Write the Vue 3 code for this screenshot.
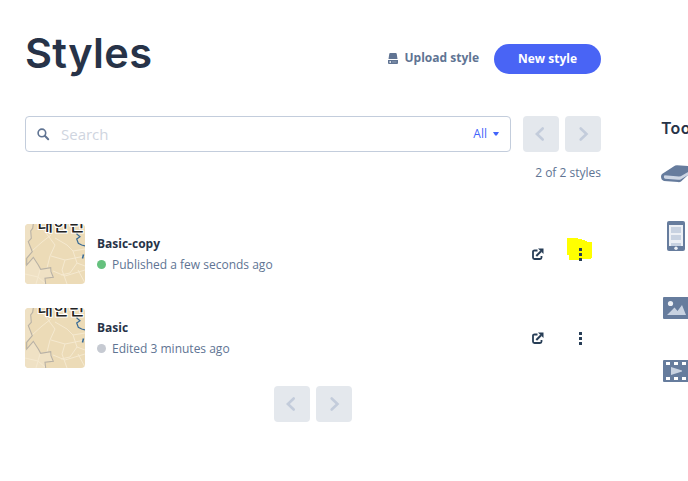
<script setup>
const styles = [
  { name: 'Basic-copy', status: 'Published a few seconds ago', live: true, marked: true },
  { name: 'Basic', status: 'Edited 3 minutes ago', live: false, marked: false },
]
</script>

<template>
  <div class="page">
    <main class="main">
      <header class="head">
        <h1 class="title">Styles</h1>
        <div class="actions">
          <a class="upload">
            <svg width="10" height="11" viewBox="0 0 10 11" fill="currentColor">
              <path d="M2.200 0h5.600q.8 0 .9.800L9.500 6H.5L1.300.8Q1.400 0 2.200 0z" />
              <path fill-rule="evenodd" d="M0 7h10v3q0 1-1 1H1q-1 0-1-1zM1.500 8.300v1.400H3V8.300z" />
              <path d="M4 8.300h4.500v1.300H4z" fill="#8394ad" />
            </svg>
            <span>Upload style</span>
          </a>
          <button class="new">New style</button>
        </div>
      </header>

      <div class="tools">
        <div class="search">
          <svg width="13" height="13" viewBox="0 0 13 13" fill="none" stroke="#607493">
            <circle cx="4.9" cy="4.9" r="3.8" stroke-width="1.6" />
            <path d="M7.8 7.8l3.4 3.4" stroke-width="2" stroke-linecap="round" />
          </svg>
          <span class="placeholder">Search</span>
          <span class="filter">All</span>
          <svg width="6" height="4" viewBox="0 0 6 4"><path d="M0 0h6L3.8 3.6H2.2z" fill="#4264fb" /></svg>
        </div>
        <div class="pager">
          <span class="page-btn"><svg width="18" height="18" viewBox="0 0 18 18"><path d="M10.700 3.500L4.900 9l5.800 5.500" /></svg></span>
          <span class="page-btn"><svg width="18" height="18" viewBox="0 0 18 18"><path d="M6.700 3.500L12.500 9l-5.800 5.500" /></svg></span>
        </div>
      </div>
      <p class="count">2 of 2 styles</p>

      <ul class="list">
        <li v-for="s in styles" :key="s.name" class="row">
          <svg class="thumb" width="60" height="60" viewBox="0 0 60 60" fill="none">
            <rect width="60" height="60" fill="#ecdbb7" />
            <path d="M0 0h8L6 7v7l-3 4 4 10-5 6H0z" fill="#efe1c4" />
            <path d="M0 41h2l6-8 5 8 3 4 10-1 2 9-8 1 1 6H0z" fill="#efe1c4" />
            <g stroke="#f5e9d0" stroke-width="1">
              <path d="M7 27l10-9 9-7M17 4l7 9 6 8-5 11-3 12M26 32l14 4 20-4M40 36l-3 10 5 14M48 27l4 12-7 10-9 2M28 47l12 5 20-6" />
              <path d="M0 50l13 3 8 7M11 60l4-14M30 14l12 7 6 6 12-2M52 39l8 3M53 46l7 13" />
            </g>
            <path d="M8.3 0l-.6 4.3-2 2.7.6 7.3-3 3.4 4 10-5.600 6.600V41l6.600-7.700 5 7.700 2.400 4.300 10-1.600.3 4 2.300 5.600-8.300 1 .7 5.700" stroke="#b8b1a5" stroke-width="1.1" />
            <path d="M53 8l-1.300 2 3.300 2.700-3.300 2.300 1.600 4.300L56.700 21l3.300 1" stroke="#396b96" stroke-width="1.2" />
            <path d="M58.500 30.500l-1 4" stroke="#396b96" stroke-width="1.6" />
            <text class="map-label" x="12.500" y="7">대한민</text>
          </svg>
          <div class="info">
            <strong class="name">{{ s.name }}</strong>
            <span class="status"><i class="dot" :class="{ live: s.live }"></i>{{ s.status }}</span>
          </div>
          <svg class="share" width="12" height="12" viewBox="0 0 12 12" fill="none" stroke="#273d56">
            <path d="M5.500 2.500H2.500Q1 2.500 1 3.500V9.500Q1 11 2.500 11H8q1.500 0 1.500-1.500V8" stroke-width="1.8" />
            <path d="M4.300 8L9 3.200" stroke-width="2" />
            <path d="M6 .5h5.500V6z" fill="#273d56" stroke="none" />
          </svg>
          <span class="more">
            <svg v-if="s.marked" class="marker" width="25" height="22" viewBox="0 0 25 22">
              <path d="M0 0h11v1h4v1h3v1h2v1h5v16h-1v1H13v1H2v-5H0z" fill="#ff0" />
            </svg>
            <svg class="dots" width="3" height="13" viewBox="0 0 3 13" fill="#273d56">
              <rect width="3" height="3" rx=".3" /><rect y="5" width="3" height="3" rx=".3" /><rect y="10" width="3" height="3" rx=".3" />
            </svg>
          </span>
        </li>
      </ul>

      <div class="pager bottom">
        <span class="page-btn"><svg width="18" height="18" viewBox="0 0 18 18"><path d="M10.700 3.500L4.900 9l5.800 5.500" /></svg></span>
        <span class="page-btn"><svg width="18" height="18" viewBox="0 0 18 18"><path d="M6.700 3.500L12.500 9l-5.800 5.500" /></svg></span>
      </div>
    </main>

    <aside class="side">
      <h2 class="side-title">Tools</h2>
      <svg class="book" width="36" height="18" viewBox="0 0 36 18">
        <path d="M1 9L13 1.300Q14 .3 16 .3L36 1.500 20 16.500q-1 .8-3 .6L3 16Q0 15 0 11.500 0 10 1 9z" fill="#667c9d" />
        <path d="M3.500 10.200L18 11.500q2 0 3-1L35 2.500v2.500L20 14.300q-1 .7-3 .5L4 13.700Q2 12.500 3.500 10.200z" fill="#cdd6e4" />
      </svg>
      <svg class="phone" width="18" height="30" viewBox="0 0 18 30">
        <rect width="18" height="30" rx="2" fill="#667c9d" />
        <rect x="2" y="4" width="14" height="21" fill="#edf0f5" />
        <path d="M4 6h10v6H4zM4 14h10v5H4zM4 22h10v3H4z" fill="#c8d2e1" />
        <circle cx="9" cy="27.300" r="1.700" fill="#edf0f5" />
      </svg>
      <svg class="image" width="30" height="22" viewBox="0 0 30 22">
        <rect width="30" height="22" rx="1" fill="#667c9d" />
        <circle cx="7.500" cy="6.500" r="2.600" fill="#edf0f5" />
        <path d="M4 18l7.500-7.500 3 3.500L19 8l4 10z" fill="#c8d2e1" />
      </svg>
      <svg class="film" width="30" height="22" viewBox="0 0 30 22">
        <rect width="30" height="22" rx="1" fill="#667c9d" />
        <path d="M3 2h4v3H3zM11 2h4v3h-4zM19 2h4v3h-4zM3 17h4v3H3zM11 17h4v3h-4zM19 17h4v3h-4z" fill="#fff" />
        <path d="M8 7l11 3.500v1L8 15z" fill="#c8d2e1" />
      </svg>
    </aside>
  </div>
</template>

<style>
body {
  background: #fff;
  overflow: hidden;
}
</style>

<style scoped>
.page {
  box-sizing: border-box;
  display: flex;
  gap: 60px;
  width: 688px;
  height: 481px;
  padding-left: 25px;
  overflow: hidden;
  font-family: "Open Sans", "Noto Sans CJK KR", sans-serif;
  font-size: 12px;
  line-height: 18px;
  color: #607493;
}
svg { display: block; flex: none; }
.main { flex: none; width: 576px; }
.head {
  display: flex;
  justify-content: space-between;
  height: 116px;
}
.title {
  margin: 23px 0 0;
  font-family: Inter, "Open Sans", sans-serif;
  font-size: 41.5px;
  line-height: 60px;
  font-weight: 600;
  letter-spacing: 0.35px;
  color: #273348;
}
.actions {
  display: flex;
  align-items: flex-start;
  gap: 15px;
  padding-top: 44px;
}
.upload {
  display: flex;
  align-items: center;
  gap: 7px;
  height: 28px;
  font-weight: 700;
}
.new {
  width: 107px;
  height: 30px;
  padding: 0;
  border: 0;
  border-radius: 15px;
  background: #4964f5;
  color: #fff;
  font: 700 12px/30px "Open Sans", sans-serif;
}
.tools { display: flex; gap: 12px; }
.search {
  box-sizing: border-box;
  display: flex;
  align-items: center;
  width: 486px;
  height: 36px;
  padding: 0 11px;
  border: 1px solid #c3cddc;
  border-radius: 4px;
}
.placeholder {
  flex: 1;
  margin-left: 11px;
  font-size: 15px;
  color: #cfd5e0;
}
.filter { margin-right: 6px; color: #4264fb; }
.pager { display: flex; gap: 6px; }
.page-btn {
  display: grid;
  place-items: center;
  width: 36px;
  height: 36px;
  border-radius: 4px;
  background: #e4e8ed;
}
.page-btn path {
  fill: none;
  stroke: #c3ccdb;
  stroke-width: 2.6;
  stroke-linecap: round;
}
.count { margin: 12px 0 42px; text-align: right; }
.list {
  display: grid;
  gap: 24px;
  margin: 0;
  padding: 0;
  list-style: none;
}
.row { display: flex; align-items: center; height: 60px; }
.thumb { border-radius: 4px; }
.map-label {
  font: 500 17px "Noto Sans CJK KR", sans-serif;
  fill: #222;
  stroke: #fff;
  stroke-width: 2px;
  paint-order: stroke;
}
.info {
  flex: 1;
  display: flex;
  flex-direction: column;
  gap: 3px;
  margin-left: 12px;
}
.name { color: #273348; }
.status { display: flex; align-items: center; }
.dot {
  width: 9px;
  height: 9px;
  margin-right: 6px;
  border-radius: 50%;
  background: #c6cad2;
}
.dot.live { background: #65c17e; }
.share { margin-right: 35px; }
.more { position: relative; width: 3px; margin-right: 19px; }
.marker { position: absolute; left: -12px; top: -10px; }
.dots { position: relative; }
.bottom { justify-content: center; margin-top: 18px; }
.side { flex: none; width: 60px; padding-top: 119px; }
.side-title {
  margin: 0;
  font-family: Inter, "Open Sans", sans-serif;
  font-size: 16px;
  line-height: 18px;
  font-weight: 600;
  letter-spacing: 0.3px;
  color: #273348;
}
.book { margin-top: 28px; }
.phone { margin: 38px 0 0 6px; }
.image { margin: 46px 0 0 2px; }
.film { margin: 41px 0 0 2px; }
</style>
